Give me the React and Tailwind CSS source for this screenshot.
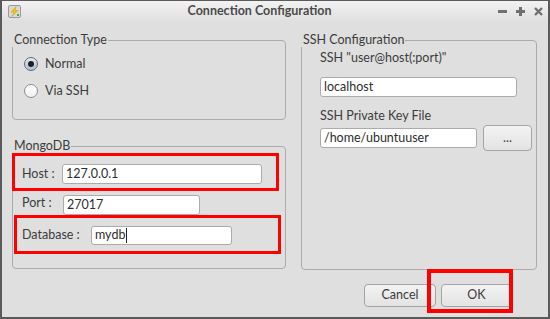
import { useState } from "react";

function Radio({ checked, label }) {
  return (
    <label className="flex h-[20px] items-center gap-[7px]">
      <span
        className={
          checked
            ? "flex h-[14px] w-[14px] items-center justify-center rounded-full border border-[#5f6b78] bg-gradient-to-b from-[#e4ecf4] to-[#a9bfd6]"
            : "h-[14px] w-[14px] rounded-full border border-[#8c8c8c] bg-gradient-to-b from-[#ffffff] to-[#f0f0f0]"
        }
      >
        {checked && <span className="h-[6px] w-[6px] rounded-full bg-[#1f1f1f]" />}
      </span>
      <span>{label}</span>
    </label>
  );
}

function Field({ value, className, caret }) {
  return (
    <div
      className={`flex items-center rounded-[3px] border border-[#ababab] bg-white pl-[3px] text-[#2e2e2e] ${className}`}
    >
      {value}
      {caret && <span className="ml-px h-[15px] w-px bg-[#222]" />}
    </div>
  );
}

function Button({ children, className }) {
  return (
    <button
      className={`flex items-center justify-center rounded-[4px] border border-[#a4a4a4] bg-gradient-to-b from-[#f3f3f3] to-[#e3e3e3] text-[#3c3c3c] ${className}`}
    >
      {children}
    </button>
  );
}

// group box: title sits over the frame's top edge
function Group({ title, className, frameClass, children }) {
  return (
    <div className={`flex flex-col ${className}`}>
      <div className="relative z-10 h-[16px] leading-[16px]">
        <span className="bg-[#dfdfdf] pl-[2px] pr-[1px]">{title}</span>
      </div>
      <div className={`-mt-[8px] flex-1 rounded-[4px] border border-[#ababab] ${frameClass}`}>{children}</div>
    </div>
  );
}

function AppIcon() {
  return (
    <svg width="13" height="13" viewBox="0 0 13 13">
      <rect x="0.5" y="0.5" width="12" height="12" rx="1.5" fill="#d9d9d9" stroke="#9a9a9a" />
      <path d="M8 1.5 L3 7 L6 7 L4 11.5 L10 5.5 L7 5.5 Z" fill="#f0c419" stroke="#c99a0a" strokeWidth="0.5" />
      <rect x="9" y="9" width="2" height="2" fill="#3fae49" />
    </svg>
  );
}

export default function App() {
  const [mode] = useState("normal");

  return (
    <div className="flex h-[319px] w-[550px] flex-col border-2 border-t border-[#5a5a5a] bg-[#dfdfdf] font-['Lato',sans-serif] text-[12.5px] text-[#3c3c3c]">
      {/* Title bar */}
      <div className="flex h-[21px] items-center bg-gradient-to-b from-[#f2f2f2] to-[#dfdfdf] pl-[6px] pr-[5px]">
        <AppIcon />
        <div className="flex-1 text-center text-[12.5px] font-bold text-[#4a4a4a]">Connection Configuration</div>
        <div className="flex items-center gap-[9px]">
          <span className="h-[3px] w-[9px] bg-[#707070]" />
          <span className="relative h-[9px] w-[9px]">
            <span className="absolute left-0 top-[3px] h-[3px] w-[9px] bg-[#707070]" />
            <span className="absolute left-[3px] top-0 h-[9px] w-[3px] bg-[#707070]" />
          </span>
          <svg width="9" height="9" viewBox="0 0 9 9">
            <path d="M1 1 L8 8 M8 1 L1 8" stroke="#707070" strokeWidth="2.4" />
          </svg>
        </div>
      </div>

      <div className="flex flex-1 flex-col px-[10px]">
        <div className="mt-[10px] flex gap-[15px]">
          {/* Left column */}
          <div className="flex w-[274px] flex-col">
            <Group title="Connection Type" className="h-[88px]" frameClass="pl-[11px] pt-[13px]">
              <div className="flex flex-col gap-[7px]">
                <Radio checked={mode === "normal"} label="Normal" />
                <Radio checked={mode === "ssh"} label="Via SSH" />
              </div>
            </Group>

            <Group title="MongoDB" className="mt-[18px] h-[131px]" frameClass="pt-[6px]">
              <div className="-ml-px flex h-[38px] w-[267px] items-center border-[3px] border-[#ff0000] pl-[7px] pt-[4px]">
                <span className="w-[40px]">Host :</span>
                <Field value="127.0.0.1" className="h-[20px] w-[200px]" />
              </div>
              <div className="flex h-[24px] items-end pl-[9px]">
                <span className="mb-[2px] w-[41px]">Port :</span>
                <Field value="27017" className="h-[20px] w-[137px]" />
              </div>
              <div className="ml-px flex h-[39px] w-[267px] items-center border-[3px] border-[#ff0000] pl-[5px] pt-[1px]">
                <span className="w-[69px]">Database :</span>
                <Field value="mydb" caret className="h-[19px] w-[141px]" />
              </div>
            </Group>
          </div>

          {/* Right column */}
          <Group title="SSH Configuration" className="h-[238px] w-[236px]" frameClass="pl-[18px] pt-[9px]">
            <div className="leading-[16px]">SSH "user@host(:port)"</div>
            <Field value="localhost" className="mt-[11px] h-[20px] w-[197px]" />
            <div className="mt-[11px] leading-[16px]">SSH Private Key File</div>
            <div className="mt-[1px] flex items-center gap-[6px]">
              <Field value="/home/ubuntuuser" className="h-[20px] w-[157px]" />
              <Button className="h-[26px] w-[49px]">...</Button>
            </div>
          </Group>
        </div>

        {/* Dialog buttons */}
        <div className="mt-[14px] flex justify-end gap-[5px] pr-[26px]">
          <Button className="h-[23px] w-[72px]">Cancel</Button>
          <div className="relative">
            <Button className="h-[23px] w-[71px]">OK</Button>
            <div className="pointer-events-none absolute -bottom-[6px] -left-[14px] -right-px -top-[15px] border-[4px] border-[#ff0000]" />
          </div>
        </div>
      </div>
    </div>
  );
}
